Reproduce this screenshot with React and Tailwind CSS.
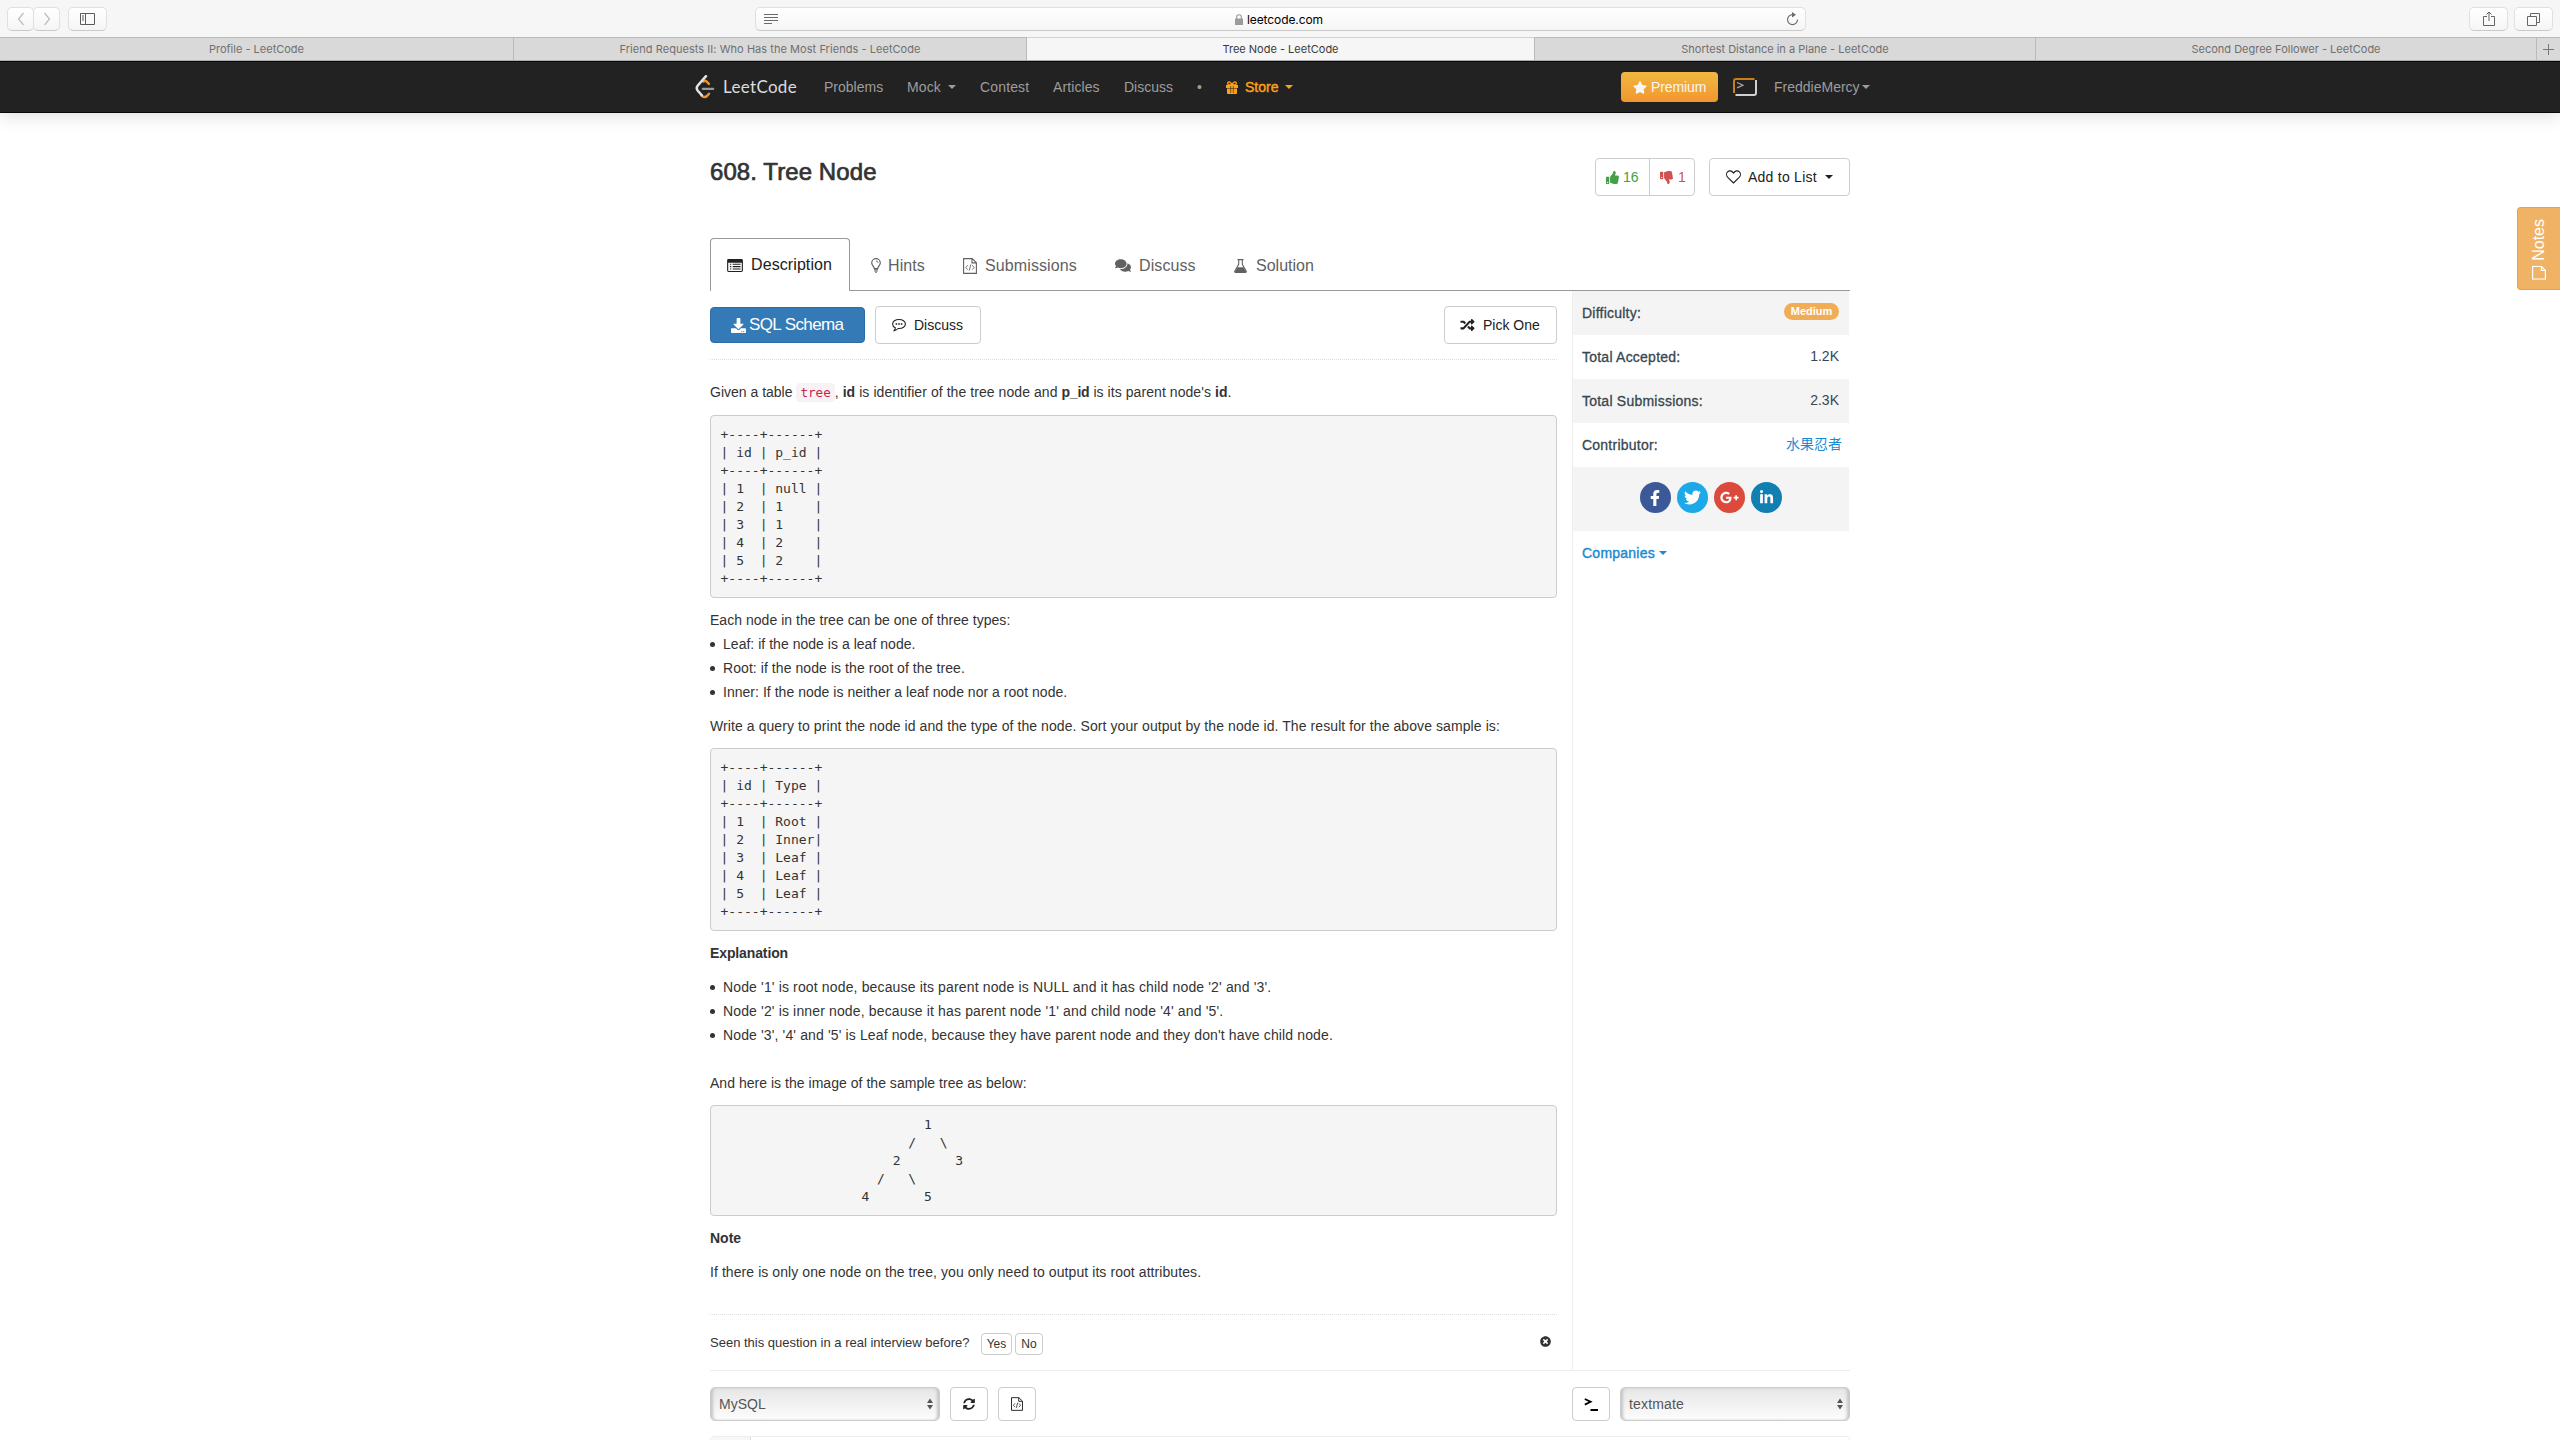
import React from "react";
import {
  FaStar, FaThumbsUp, FaThumbsDown, FaComments,
  FaDownload, FaRandom, FaFacebookF, FaTwitter, FaGooglePlusG, FaLinkedinIn,
  FaTimesCircle, FaSyncAlt,
} from "react-icons/fa";

const table1 = `+----+------+
| id | p_id |
+----+------+
| 1  | null |
| 2  | 1    |
| 3  | 1    |
| 4  | 2    |
| 5  | 2    |
+----+------+`;

const table2 = `+----+------+
| id | Type |
+----+------+
| 1  | Root |
| 2  | Inner|
| 3  | Leaf |
| 4  | Leaf |
| 5  | Leaf |
+----+------+`;

const tree = `                          1
                        /   \\
                      2       3
                    /   \\
                  4       5`;

const Caret = ({ className = "" }) => (
  <span className={`inline-block h-0 w-0 shrink-0 border-x-4 border-t-4 border-x-transparent ${className}`} />
);

const GiftIcon = ({ className }) => (
  <svg className={className} width="12" height="13" viewBox="0 0 12 13">
    <path d="M0 4h12v3H0zM1 7.500h10V12q0 1-1 1H2q-1 0-1-1z" fill="currentColor" />
    <path d="M6 4C5 1.500 4.200.8 3.200.8a1.500 1.500 0 0 0 0 3.100zM6 4C7 1.500 7.800.8 8.800.8a1.500 1.500 0 0 1 0 3.100z" fill="none" stroke="currentColor" strokeWidth="1.300" />
    <path d="M4.700 5v7M7.300 5v7" stroke="#222" strokeWidth=".6" />
  </svg>
);

const HeartIcon = () => (
  <svg width="15" height="14" viewBox="0 0 15 14" fill="none" stroke="currentColor" strokeWidth="1.100" strokeLinejoin="round">
    <path d="M7.500 13 1.800 7.400C.2 5.700.2 3.200 1.600 1.800c1.600-1.600 4.300-1.200 5.900 1.300C9.100.6 11.800.2 13.400 1.800c1.400 1.400 1.400 3.900-.2 5.600z" />
  </svg>
);

const BulbIcon = ({ className }) => (
  <svg className={className} width="10" height="15" viewBox="0 0 10 15" fill="none" stroke="currentColor">
    <path d="M3.300 10.500C3.200 8.500.7 7.500.7 4.700A4.200 4.200 0 0 1 5 .7a4.200 4.200 0 0 1 4.300 4c0 2.800-2.500 3.800-2.600 5.800z" strokeWidth="1.200" />
    <path d="M3 11.700h4M3.200 13h3.600M4.200 14.300h1.600M5 3q1.700 0 2 1.700" />
  </svg>
);

const FileCodeIcon = ({ className, w = 14, h = 16 }) => (
  <svg className={className} width={w} height={h} viewBox="0 0 14 16" fill="none" stroke="currentColor" strokeWidth="1.100">
    <path d="M.6.600h8.600l4.200 4.100v10.700H.6zM9 .8v4.100h4.200" />
    <path d="M4.700 7.300 2.800 9.500l1.900 2.200M9.300 7.300l1.900 2.200-1.900 2.200M7.700 6.500l-1.400 6" strokeWidth=".9" />
  </svg>
);

const FlaskIcon = ({ className }) => (
  <svg className={className} width="13" height="14" viewBox="0 0 13 14">
    <path d="M3.500.6h6M4.700.8v4.500L.9 11.900q-.6 1.500.9 1.500h9.400q1.500 0 .9-1.500L8.300 5.300V.8" fill="none" stroke="currentColor" strokeWidth="1.100" />
    <path d="M3.500 8.300h6l2.900 5H.6z" fill="currentColor" />
  </svg>
);

const CommentIcon = ({ className }) => (
  <svg className={className} width="14" height="14" viewBox="0 0 14 14" fill="none" stroke="currentColor">
    <path d="M7 1.500c3.600 0 6.400 2 6.400 4.500s-2.800 4.500-6.400 4.500h-.8C5 11.800 3.800 12.400 2.200 12.600c.7-.8 1-1.600 1.100-2.800C1.600 9 .6 7.600.6 6 .6 3.500 3.400 1.500 7 1.500z" strokeWidth="1.100" />
    <path d="M3.600 6h1.600M6.200 6h1.600M8.800 6h1.600" strokeWidth="1.500" />
  </svg>
);

function Toolbar() {
  const btn = "flex h-6 items-center justify-center rounded-[5px] border border-[#e0e0e0] border-b-[#c9c9c9] bg-gradient-to-b from-white to-[#f5f5f5]";
  return (
    <div className="flex h-[37px] items-start bg-[#f6f6f6] pt-[7px]">
      <div className={`ml-[7px] w-[27px] ${btn}`}>
        <svg width="8" height="14" viewBox="0 0 8 14" fill="none" stroke="#bdbdbd" strokeWidth="1.3"><path d="M6.5 1 1.5 7l5 6" /></svg>
      </div>
      <div className={`-ml-px w-[27px] ${btn}`}>
        <svg width="8" height="14" viewBox="0 0 8 14" fill="none" stroke="#bdbdbd" strokeWidth="1.3"><path d="m1.500 1 5 6-5 6" /></svg>
      </div>
      <div className={`ml-2 w-[39px] ${btn}`}>
        <svg width="15" height="12" viewBox="0 0 15 12" fill="none" stroke="#5c5c5c"><path d="M.5.5h14v11H.5zM5.500.5v11M2 3h2M2 5h2M2 7h2" /></svg>
      </div>
      <div className={`ml-[648px] w-[1051px] justify-between! px-2 ${btn}`}>
        <svg width="14" height="11" viewBox="0 0 14 11" stroke="#6a6a6a"><path d="M0 .5h14M0 3.500h14M0 6.500h14M0 9.500h8" /></svg>
        <div className="mr-[6px] mt-px flex items-center gap-1 font-[Inter,sans-serif] text-[12px] leading-4 tracking-[-0.09px] text-black">
          <svg className="-mt-px" width="8" height="11" viewBox="0 0 8 11"><path d="M0 4.500h8V11H0z" fill="#9b9b9b" /><path d="M1.700 5V3a2.300 2.300 0 0 1 4.600 0v2" fill="none" stroke="#9b9b9b" strokeWidth="1.100" /></svg>
          leetcode.com
        </div>
        <svg className="mr-[-2px]" width="13" height="14" viewBox="0 0 13 14"><path d="M6.500 2.600a5 5 0 1 0 5 5" fill="none" stroke="#6a6a6a" strokeWidth="1.100" /><path d="M6 0l4 2.700L6 5.500z" fill="#6a6a6a" /></svg>
      </div>
      <div className={`ml-[663px] w-[39px] ${btn}`}>
        <svg width="12" height="16" viewBox="0 0 12 16" fill="none" stroke="#666"><path d="M4 5.500H.5v9h11v-9H8M6 10V1M3.500 3.500 6 1l2.500 2.500" /></svg>
      </div>
      <div className={`ml-[6px] w-[39px] ${btn}`}>
        <svg width="13" height="13" viewBox="0 0 13 13" fill="none" stroke="#666"><path d="M.5 3.500h9v9h-9zM3.500 3.500v-3h9v9h-3" /></svg>
      </div>
    </div>
  );
}

function BrowserTabs() {
  const tab = "flex items-center justify-center border-r border-t border-[#bababa] bg-[#d9d9d9] text-[#6f6f6f]";
  return (
    <div className="flex h-6 border-b border-[#b4b4b4] font-[Inter,sans-serif] text-[11px]">
      <div className={`w-[514px] ${tab}`}>Profile - LeetCode</div>
      <div className={`w-[513px] ${tab}`}><span className="tracking-[0.047px]">Friend Requests II: Who Has the Most Friends - LeetCode</span></div>
      <div className="flex w-[508px] items-center justify-center border-r border-t border-[#bababa] border-t-[#d2d2d2] bg-[#f6f6f6] text-[#3a3a3a]">Tree Node - LeetCode</div>
      <div className={`w-[501px] ${tab}`}>Shortest Distance in a Plane - LeetCode</div>
      <div className={`w-[501px] ${tab}`}>Second Degree Follower - LeetCode</div>
      <div className="flex flex-1 items-center justify-center border-t border-[#bababa] bg-[#d9d9d9]">
        <svg width="11" height="11" viewBox="0 0 11 11" stroke="#777"><path d="M5.500 0v11M0 5.500h11" /></svg>
      </div>
    </div>
  );
}

function Navbar() {
  return (
    <div className="h-[52px] border-b border-t border-[#080808] bg-[#222] text-sm leading-5 text-[#9d9d9d] shadow-[0_4px_16px_rgba(0,0,0,0.12)]">
      <div className="ml-[695px] flex h-[50px] w-[1175px] items-center whitespace-nowrap">
        <svg className="-mt-px" width="20" height="24" viewBox="0 0 20 24" fill="none" strokeLinecap="round">
          <path d="M8.500 6.500c1-1 2.200-.8 3.200.1l2.200 2.200" stroke="#e8962e" strokeWidth="2.500" />
          <path d="M6.500 20.500c1.700 2 4 2 5.500.5l2-2.300" stroke="#e8962e" strokeWidth="2.500" />
          <path d="M11 1.200 2.800 10.500c-1.400 1.700-1.400 3.500 0 5.200l4 4.600" stroke="#e3e3e3" strokeWidth="2.500" />
          <path d="M7.800 13.800h10.400" stroke="#9a9a9a" strokeWidth="2.300" />
        </svg>
        <span className="ml-[8px] w-[75px] font-[Lato,sans-serif] text-[17px] tracking-[0.32px] text-[#dcdcdc]">LeetCode</span>
        <span className="ml-[26px] w-[59px]">Problems</span>
        <span className="ml-[24px] w-[36px] tracking-[0.1px]">Mock</span>
        <Caret className="ml-[5px]" />
        <span className="ml-[24px] w-[49px] tracking-[0.15px]">Contest</span>
        <span className="ml-[24px] w-[47px] tracking-[0.1px]">Articles</span>
        <span className="ml-[24px] w-[49px]">Discuss</span>
        <span className="ml-[24px] w-[4px]">•</span>
        <GiftIcon className="ml-[25px] text-[#ffa116]" />
        <span className="ml-[7px] w-[34px] text-[#ffa116] [-webkit-text-stroke:0.4px_currentColor]">Store</span>
        <Caret className="ml-[6px] text-[#ffa116]" />
        <span className="ml-auto flex h-[30px] w-[97px] items-center rounded bg-gradient-to-b from-[#f0b840] to-[#f2962e] pl-[12px] tracking-[-0.1px] text-[#f6f6f6]">
          <FaStar className="mr-[4px] h-[13px] w-[14px]" />Premium
        </span>
        <svg className="ml-[15px]" width="24" height="18" viewBox="0 0 24 18" fill="none" strokeWidth="2">
          <path d="M21.500 1H3Q1 1 1 3v12" stroke="#c97f1c" />
          <path d="M23 2v13q0 2-2 2H2.500" stroke="#cfd1d1" />
          <path d="m4 4.500 6 2.700-6 2.700" stroke="#a8a8a8" strokeWidth="1.200" />
        </svg>
        <span className="ml-[17px] w-[86px]">FreddieMercy</span>
        <Caret className="ml-[2px]" />
      </div>
    </div>
  );
}

function Header() {
  return (
    <div className="flex h-[80px] items-start text-[#212121]">
      <h1 className="mt-[-3px] text-[24px] leading-[34px] tracking-[0.08px] text-[#333] [-webkit-text-stroke:0.7px_currentColor]">608. Tree Node</h1>
      <div className="ml-auto flex h-[38px] w-[100px] rounded border border-[#ccc]">
        <div className="flex w-[54px] items-center gap-[4px] border-r border-[#ccc] pl-[10px] text-[#43a047]"><FaThumbsUp className="h-[13px] w-[13px]" />16</div>
        <div className="flex items-center gap-[5px] pl-[10px] text-[#d15050]"><FaThumbsDown className="h-[13px] w-[13px]" />1</div>
      </div>
      <div className="ml-[14px] flex h-[38px] w-[141px] items-center rounded border border-[#ccc] pl-4 text-[#212121]">
        <HeartIcon />
        <span className="ml-[7px] w-[70px] tracking-[0.25px]">Add to List</span>
        <Caret className="ml-[7px]" />
      </div>
    </div>
  );
}

function Tabs() {
  return (
    <div className="flex h-[53px] items-stretch text-[16px] leading-[22px] text-[#616161]">
      <div className="flex w-[140px] items-center rounded-t border border-b-0 border-[#999] pl-[16px] text-[#212121]">
        <svg width="16" height="13" viewBox="0 0 17 14"><path d="M1.500 0h14A1.500 1.500 0 0 1 17 1.500v11a1.500 1.500 0 0 1-1.500 1.500h-14A1.500 1.500 0 0 1 0 12.500v-11A1.500 1.500 0 0 1 1.500 0zM1.200 4v8.300q0 .5.5.5h13.600q.5 0 .5-.5V4z" fill="currentColor" fillRule="evenodd" /><path d="M3 5.700h1.500M6 5.700h8.500M3 8.200h1.500M6 8.200h8.500M3 10.700h1.500M6 10.700h8.500" stroke="currentColor" strokeWidth="1.200" /></svg>
        <span className="ml-[8px] tracking-[0.09px]">Description</span>
      </div>
      <div className="flex flex-1 items-center whitespace-nowrap border-b border-[#999] pt-[3px]">
        <BulbIcon className="ml-[21px]" />
        <span className="ml-[7px] w-[38px] tracking-[0.1px]">Hints</span>
        <FileCodeIcon className="ml-[37px]" />
        <span className="ml-[8px] w-[92px] tracking-[0.11px]">Submissions</span>
        <FaComments className="ml-[38px] h-[15px] w-[16px]" />
        <span className="ml-[8px] w-[57px] tracking-[0.1px]">Discuss</span>
        <FlaskIcon className="ml-[38px]" />
        <span className="ml-[9px] w-[60px]">Solution</span>
      </div>
    </div>
  );
}

const Pre = ({ children }) => (
  <pre className="my-[10px] rounded border border-[#ccc] bg-[#f5f5f5] p-[9.500px] font-['DejaVu_Sans_Mono',monospace] text-[13px] leading-[18px] text-[#333]">{children}</pre>
);

const Item = ({ children }) => (
  <li className="flex items-center whitespace-nowrap"><span className="mr-[8px] mt-px h-[5px] w-[5px] rounded-full bg-[#333]" />{children}</li>
);

function Description() {
  const btn = "flex h-[38px] items-center rounded border border-[#ccc] text-[#212121]";
  return (
    <div className="w-[847px]">
      <div className="flex h-[68px] items-start pt-[15px]">
        <div className="mt-px flex h-[36px] w-[155px] items-center rounded border border-[#2e6da4] bg-[#337ab7] pl-[20px] text-[17px] tracking-[-0.6px] text-white">
          <FaDownload className="mr-[3px] h-[15px] w-[15px]" />SQL Schema
        </div>
        <div className={`ml-[10px] w-[106px] pl-4 ${btn}`}><CommentIcon className="mr-2" />Discuss</div>
        <div className={`ml-auto w-[113px] pl-[15px] ${btn}`}><FaRandom className="mr-2 h-[14px] w-[15px]" />Pick One</div>
      </div>
      <div className="border-t border-dotted border-[#ddd]" />
      <div className="pt-[20px] leading-6 text-[#333]">
        <p className="whitespace-nowrap">
          Given a table <code className="rounded bg-[#f9f2f4] px-[4px] py-[2px] font-['DejaVu_Sans_Mono',monospace] text-[12.600px] text-[#c7254e]">tree</code>
          <span className="tracking-[0.065px]">, <b>id</b> is identifier of the tree node and <b className="tracking-[-0.2px]">p_id</b> is its parent node's <b>id</b>.</span>
        </p>
        <Pre>{table1}</Pre>
        <p className="tracking-[0.03px]">Each node in the tree can be one of three types:</p>
        <ul className="tracking-[0.03px]">
          <Item>Leaf: if the node is a leaf node.</Item>
          <Item><span className="tracking-[0.07px]">Root: if the node is the root of the tree.</span></Item>
          <Item>Inner: If the node is neither a leaf node nor a root node.</Item>
        </ul>
        <p className="mt-[10px] whitespace-nowrap tracking-[0.082px]">Write a query to print the node id and the type of the node. Sort your output by the node id. The result for the above sample is:</p>
        <Pre>{table2}</Pre>
        <p className="font-bold tracking-[-0.12px]">Explanation</p>
        <ul className="mt-[10px] tracking-[0.145px]">
          <Item>Node '1' is root node, because its parent node is NULL and it has child node '2' and '3'.</Item>
          <Item>Node '2' is inner node, because it has parent node '1' and child node '4' and '5'.</Item>
          <Item><span className="tracking-[0.133px]">Node '3', '4' and '5' is Leaf node, because they have parent node and they don't have child node.</span></Item>
        </ul>
        <p className="mt-[24px] tracking-[0.03px]">And here is the image of the sample tree as below:</p>
        <Pre>{tree}</Pre>
        <p className="font-bold">Note</p>
        <p className="mt-[10px] tracking-[0.075px]">If there is only one node on the tree, you only need to output its root attributes.</p>
      </div>
      <div className="mt-[30px] border-t border-dotted border-[#ddd]" />
      <div className="flex items-start text-[13px] leading-5 text-[#333]">
        <span className="mt-[18px] w-[271px]">Seen this question in a real interview before?</span>
        <span className="mt-[18px] flex h-[22px] w-[31px] items-center justify-center rounded-[4px] border border-[#ccc] text-[12px]">Yes</span>
        <span className="ml-[3px] mt-[18px] flex h-[22px] w-[28px] items-center justify-center rounded-[4px] border border-[#ccc] text-[12px]">No</span>
        <FaTimesCircle className="ml-auto mr-[6px] mt-[21px] h-[11px] w-[11px]" />
      </div>
    </div>
  );
}

const Row = ({ label, gray, children }) => (
  <div className={`flex h-11 items-center justify-between pl-[9px] pr-[10px] ${gray ? "bg-[#f4f4f4]" : ""}`}>
    <span className="tracking-[0.23px] [-webkit-text-stroke:0.3px_currentColor]">{label}</span>
    {children}
  </div>
);

const Social = ({ className, children }) => (
  <span className={`flex h-[31px] w-[31px] items-center justify-center rounded-full text-white ${className}`}>{children}</span>
);

function Sidebar() {
  return (
    <div className="mr-px w-[277px] border-l border-[#eee] text-[#37474f]">
      <Row label="Difficulty:" gray><span className="-mt-[3px] h-[17px] w-[55px] rounded-full bg-[#f0ad56] text-center text-[11px] font-bold leading-[17px] text-white">Medium</span></Row>
      <Row label="Total Accepted:"><span className="-mt-[2px]">1.2K</span></Row>
      <Row label="Total Submissions:" gray><span className="-mt-[2px]">2.3K</span></Row>
      <Row label="Contributor:"><span className="-mr-[3px] -mt-[5px] font-['Noto_Sans_CJK_SC',sans-serif] text-[#1a8bd2]">水果忍者</span></Row>
      <div className="flex h-[64px] items-center justify-center gap-[6px] bg-[#f4f4f4] pb-[3px] pr-px">
        <Social className="bg-[#3b5998]"><FaFacebookF size={16} /></Social>
        <Social className="bg-[#1da8e8]"><FaTwitter size={17} /></Social>
        <Social className="bg-[#dc4a3d]"><FaGooglePlusG size={19} /></Social>
        <Social className="bg-[#127fb1]"><FaLinkedinIn size={15} /></Social>
      </div>
      <div className="flex items-center pl-[9px] pt-[12px] text-[#1a8bd2]">
        <span className="tracking-[0.24px] [-webkit-text-stroke:0.4px_currentColor]">Companies</span><Caret className="ml-[4px]" />
      </div>
    </div>
  );
}

const Select = ({ className, children }) => (
  <div className={`flex h-[34px] items-center justify-between rounded-[5px] border border-[#ccc] bg-gradient-to-b from-[#e6e6e6] to-[#fdfdfd] pl-[8px] pr-[6px] text-[#555] shadow-[inset_3px_0_3px_-1px_#c4c4c4,inset_-3px_0_3px_-1px_#c4c4c4] ${className}`}>
    {children}
    <svg width="6" height="12" viewBox="0 0 7 13" fill="#555"><path d="M0 5.300 3.500 0 7 5.300zM0 7.700 3.500 13 7 7.700z" /></svg>
  </div>
);

function EditorBar() {
  const btn = "flex h-[34px] items-center justify-center rounded-[4px] border border-[#ccc] text-[#222]";
  return (
    <div className="border-t border-[#eee] pt-[16px]">
      <div className="flex">
        <Select className="w-[230px]">MySQL</Select>
        <div className={`ml-[10px] w-[38px] ${btn}`}><FaSyncAlt size={12} /></div>
        <div className={`ml-[10px] w-[38px] ${btn}`}><FileCodeIcon w={12} h={14} /></div>
        <div className={`ml-auto w-[38px] ${btn}`}>
          <svg width="14" height="13" viewBox="0 0 14 13" fill="none" stroke="#000" strokeWidth="1.800"><path d="m.8 1 5.800 2.800L.8 6.600M6.500 12H14" /></svg>
        </div>
        <Select className="ml-[10px] w-[230px] tracking-[0.15px]">textmate</Select>
      </div>
      <div className="mt-[15px] h-[10px] rounded-t border border-b-0 border-[#eee]">
        <div className="h-full w-[40px] border-r border-[#ddd] bg-[#f7f7f7]" />
      </div>
    </div>
  );
}

export default function App() {
  return (
    <div className="relative h-[1440px] w-[2560px] overflow-hidden bg-white font-['Liberation_Sans',Arial,sans-serif] text-[14px] leading-5">
      <Toolbar />
      <BrowserTabs />
      <Navbar />
      <main className="ml-[710px] w-[1140px] pt-[45px]">
        <Header />
        <Tabs />
        <div className="flex h-[1079px] justify-between">
          <Description />
          <Sidebar />
        </div>
        <EditorBar />
      </main>
      <div className="absolute right-0 top-[207px] flex h-[83px] w-[43px] items-center justify-center rounded-l border border-r-0 border-[#eea236] bg-[#f0b366] text-[16px] text-white">
        <div className="mt-[2px] flex rotate-180 items-center gap-[5px] [writing-mode:vertical-rl]">
          <svg width="14" height="14" viewBox="0 0 14 14" fill="none" stroke="currentColor" strokeWidth="1.200"><path d="M.6.6h12.800v12.800H4.600L.6 9.400zM4.600 13.200V9.400H.8" /></svg>
          Notes
        </div>
      </div>
    </div>
  );
}
